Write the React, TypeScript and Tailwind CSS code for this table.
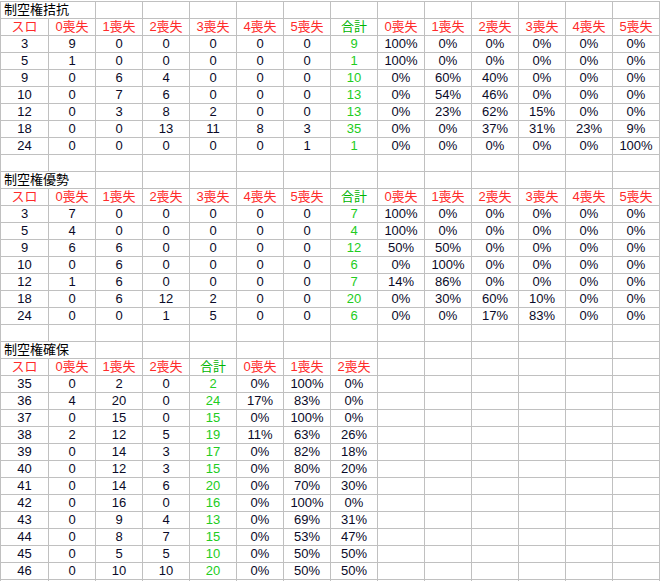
import { Fragment } from "react";

type Row = (string | number)[];

const FONT = "font-['Liberation_Sans','Noto_Sans_CJK_JP',sans-serif]";

const six = ["0喪失", "1喪失", "2喪失", "3喪失", "4喪失", "5喪失"];
const three = ["0喪失", "1喪失", "2喪失"];

const sections: { title: string; loss: string[]; rows: Row[] }[] = [
  {
    title: "制空権拮抗",
    loss: six,
    rows: [
      [3, 9, 0, 0, 0, 0, 0, 9, "100%", "0%", "0%", "0%", "0%", "0%"],
      [5, 1, 0, 0, 0, 0, 0, 1, "100%", "0%", "0%", "0%", "0%", "0%"],
      [9, 0, 6, 4, 0, 0, 0, 10, "0%", "60%", "40%", "0%", "0%", "0%"],
      [10, 0, 7, 6, 0, 0, 0, 13, "0%", "54%", "46%", "0%", "0%", "0%"],
      [12, 0, 3, 8, 2, 0, 0, 13, "0%", "23%", "62%", "15%", "0%", "0%"],
      [18, 0, 0, 13, 11, 8, 3, 35, "0%", "0%", "37%", "31%", "23%", "9%"],
      [24, 0, 0, 0, 0, 0, 1, 1, "0%", "0%", "0%", "0%", "0%", "100%"],
    ],
  },
  {
    title: "制空権優勢",
    loss: six,
    rows: [
      [3, 7, 0, 0, 0, 0, 0, 7, "100%", "0%", "0%", "0%", "0%", "0%"],
      [5, 4, 0, 0, 0, 0, 0, 4, "100%", "0%", "0%", "0%", "0%", "0%"],
      [9, 6, 6, 0, 0, 0, 0, 12, "50%", "50%", "0%", "0%", "0%", "0%"],
      [10, 0, 6, 0, 0, 0, 0, 6, "0%", "100%", "0%", "0%", "0%", "0%"],
      [12, 1, 6, 0, 0, 0, 0, 7, "14%", "86%", "0%", "0%", "0%", "0%"],
      [18, 0, 6, 12, 2, 0, 0, 20, "0%", "30%", "60%", "10%", "0%", "0%"],
      [24, 0, 0, 1, 5, 0, 0, 6, "0%", "0%", "17%", "83%", "0%", "0%"],
    ],
  },
  {
    title: "制空権確保",
    loss: three,
    rows: [
      [35, 0, 2, 0, 2, "0%", "100%", "0%"],
      [36, 4, 20, 0, 24, "17%", "83%", "0%"],
      [37, 0, 15, 0, 15, "0%", "100%", "0%"],
      [38, 2, 12, 5, 19, "11%", "63%", "26%"],
      [39, 0, 14, 3, 17, "0%", "82%", "18%"],
      [40, 0, 12, 3, 15, "0%", "80%", "20%"],
      [41, 0, 14, 6, 20, "0%", "70%", "30%"],
      [42, 0, 16, 0, 16, "0%", "100%", "0%"],
      [43, 0, 9, 4, 13, "0%", "69%", "31%"],
      [44, 0, 8, 7, 15, "0%", "53%", "47%"],
      [45, 0, 5, 5, 10, "0%", "50%", "50%"],
      [46, 0, 10, 10, 20, "0%", "50%", "50%"],
    ],
  },
];

const COLS = 14;

function Cell({ children, tone }: { children?: React.ReactNode; tone?: "red" | "green" | "lime" }) {
  const color =
    tone === "red"
      ? "text-[#ff2a2a]"
      : tone === "green"
        ? "text-[#00b400]"
        : tone === "lime"
          ? "text-[#22cc22]"
          : "text-[#0a0a28]";
  return (
    <div className={`bg-white text-center whitespace-nowrap overflow-hidden ${color}`}>
      {children}
    </div>
  );
}

function Blanks({ n }: { n: number }) {
  return (
    <>
      {Array.from({ length: n }, (_, i) => (
        <Cell key={i} />
      ))}
    </>
  );
}

export default function App() {
  return (
    <div className={`w-[660px] bg-white pt-px ${FONT} text-[13px] leading-[16px]`}>
      <div className="grid grid-cols-[47px_repeat(13,46px)] auto-rows-[16px] gap-px bg-[#c0c0c0] py-px pl-px">
        {sections.map((sec, si) => {
          const header = ["スロ", ...sec.loss, "合計", ...sec.loss];
          const totalIdx = sec.loss.length + 1;
          return (
            <Fragment key={sec.title}>
              {si > 0 && <Blanks n={COLS} />}
              {/* title overflows into the second column */}
              <div className="col-span-2 bg-white pl-[3px] text-black">{sec.title}</div>
              <Blanks n={COLS - 2} />
              {header.map((h, i) => (
                <Cell key={`h${i}`} tone={i === totalIdx ? "green" : "red"}>
                  {h}
                </Cell>
              ))}
              <Blanks n={COLS - header.length} />
              {sec.rows.map((r, ri) => (
                <Fragment key={ri}>
                  {r.map((v, i) => (
                    <Cell key={i} tone={i === totalIdx ? "lime" : undefined}>
                      {v}
                    </Cell>
                  ))}
                  <Blanks n={COLS - r.length} />
                </Fragment>
              ))}
            </Fragment>
          );
        })}
        <Blanks n={COLS} />
      </div>
    </div>
  );
}
